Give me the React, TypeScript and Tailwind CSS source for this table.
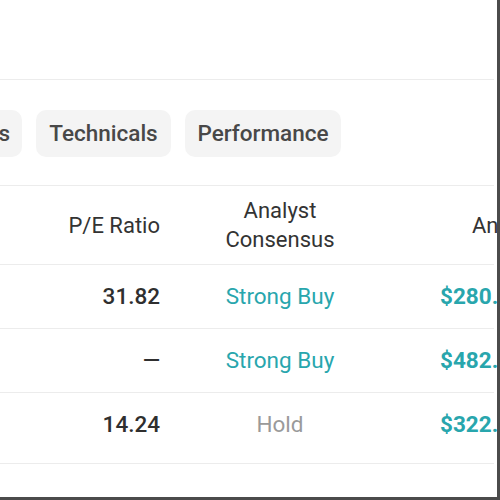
import React from 'react';

type Row = {
    pe: string;
    consensus: string;
    tone: 'buy' | 'hold';
    target: string;
};

const rows: Row[] = [
    { pe: '31.82', consensus: 'Strong Buy', tone: 'buy', target: '$280.45' },
    { pe: '—', consensus: 'Strong Buy', tone: 'buy', target: '$482.10' },
    { pe: '14.24', consensus: 'Hold', tone: 'hold', target: '$322.87' },
];

function Tab({ label, className }: { label: string; className: string }) {
    return (
        <div className={`${className} h-[47px] shrink-0 overflow-hidden whitespace-nowrap rounded-[10px] bg-[#f4f4f4] flex items-center text-[22.5px] font-medium text-[#484848]`}>
            {label}
        </div>
    );
}

export default function App() {
    return (
        <div className="w-[500px] h-[500px] overflow-hidden bg-white border-r-[3px] border-b-[3px] border-[#4b4b4b] font-['Roboto',sans-serif]">
            <div className="h-[79px]" />

            {/* tab strip, scrolled sideways */}
            <div className="mr-[3px] border-t border-b border-[#ececec] pt-[30px] pb-[28px]">
                <div className="flex gap-[14px] ml-[-118px]">
                    <Tab label="Fundamentals" className="w-[140px] justify-end pr-[12px]" />
                    <Tab label="Technicals" className="w-[135px] justify-center" />
                    <Tab label="Performance" className="w-[156px] justify-center" />
                </div>
            </div>

            <div className="mr-[3px] h-[79px] border-b border-[#ececec] flex items-center text-[22px] text-[#333]">
                <div className="w-[176px] shrink-0 pr-4 text-right">P/E Ratio</div>
                <div className="w-[208px] shrink-0 text-center leading-[29px]">
                    Analyst
                    <br />
                    Consensus
                </div>
                <div className="flex-1 whitespace-nowrap pl-[88px]">Analyst Price Target</div>
            </div>

            {rows.map((r, i) => (
                <div
                    key={i}
                    className={`mr-[3px] border-b border-[#ececec] flex items-start text-[22.5px] ${i === rows.length - 1 ? 'h-[71px]' : 'h-[64px]'}`}
                >
                    <div className="h-[63px] w-full flex items-center">
                        <div className="w-[176px] shrink-0 pr-4 text-right font-medium text-[#2f2f2f]">{r.pe}</div>
                        <div className={`w-[208px] shrink-0 text-center ${r.tone === 'buy' ? 'text-[#28a6ad]' : 'text-[#9a9a9a]'}`}>
                            {r.consensus}
                        </div>
                        <div className="flex-1 whitespace-nowrap pl-[56px] font-bold text-[#28a6ad]">{r.target}</div>
                    </div>
                </div>
            ))}
        </div>
    );
}
